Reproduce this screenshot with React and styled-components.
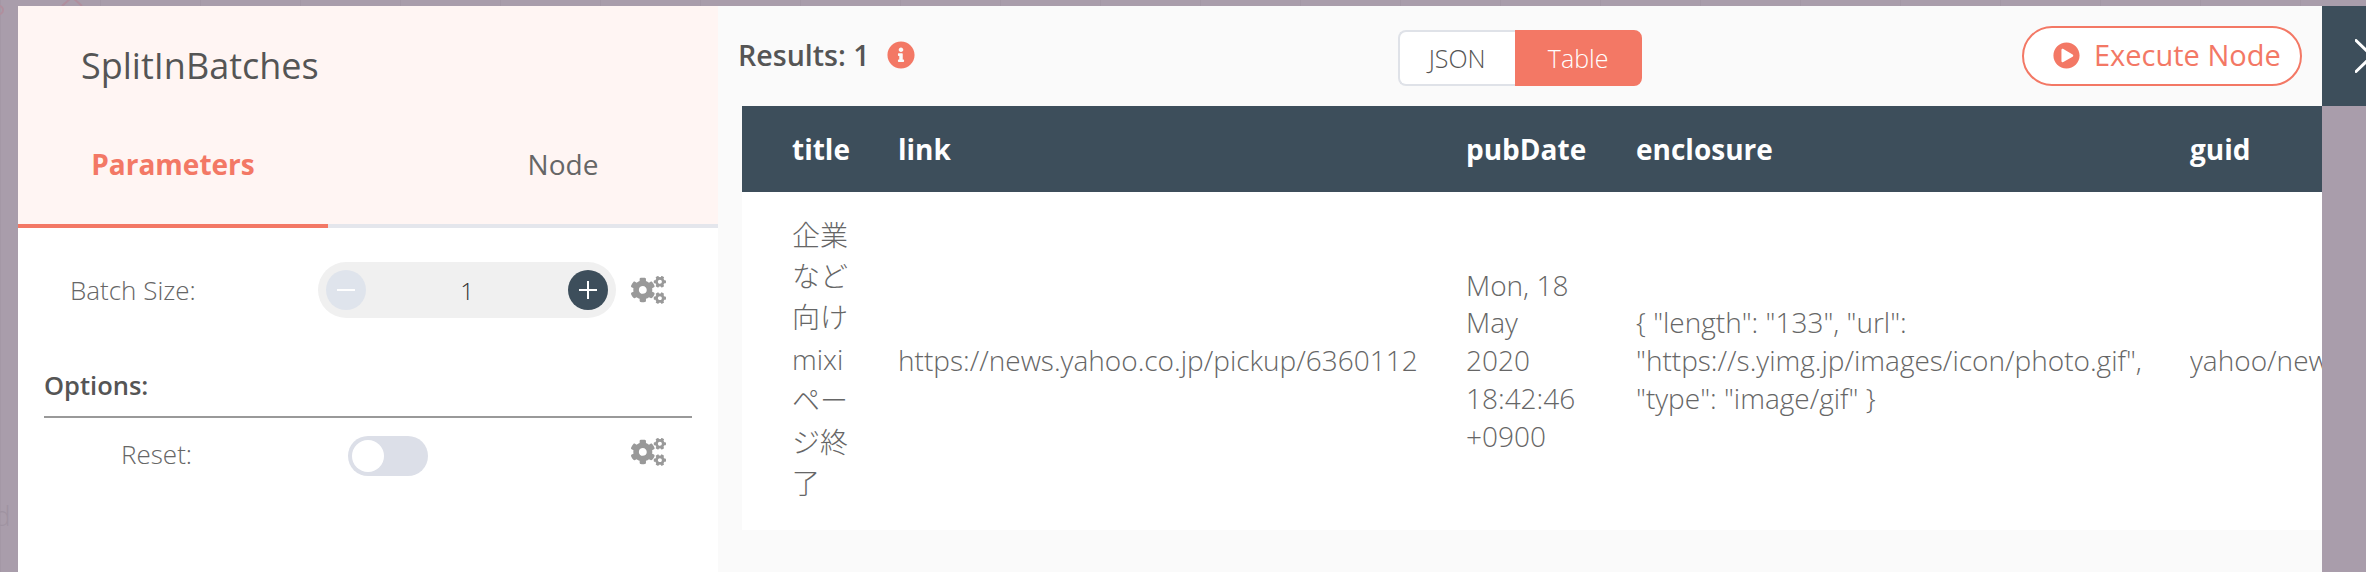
import React from 'react';
import styled, { createGlobalStyle } from 'styled-components';
import { FaCogs, FaInfoCircle, FaPlayCircle } from 'react-icons/fa';

const coral = '#f37865';
const slate = '#3d4e5b';
const textGrey = '#555';
const lightGrey = '#666';

const GlobalStyle = createGlobalStyle`
  html, body {
    margin: 0;
    padding: 0;
    height: 100%;
    overflow: hidden;
  }
  body {
    font-family: "Open Sans", "Noto Sans CJK JP", sans-serif;
    color: ${textGrey};
  }
`;

const Page = styled.div`
  position: relative;
  display: flex;
  align-items: flex-start;
  box-sizing: border-box;
  width: 2366px;
  height: 572px;
  padding: 6px 0 0 18px;
  overflow: hidden;
  background-color: #a99dab;
  background-image: linear-gradient(90deg, #a498a6 1px, transparent 1px);
  background-size: 100px 100px;
`;

/* bits of the workflow canvas showing through behind the modal */
const CanvasMark = styled.svg`
  position: absolute;
  left: 0;
  top: 0;
`;

const CanvasLetter = styled.span`
  position: absolute;
  left: -6px;
  top: 496px;
  font-size: 28px;
  font-weight: 300;
  color: #9f93a1;
`;

const LeftPanel = styled.section`
  position: relative;
  flex: none;
  width: 700px;
  height: 566px;
  background: #fff;
`;

const PanelHead = styled.header`
  background: #fff5f3;
`;

const Title = styled.h1`
  margin: 0;
  padding: 38px 0 0 63px;
  height: 62px;
  font-size: 36px;
  line-height: 44px;
  font-weight: 400;
  color: ${textGrey};
`;

const Tabs = styled.nav`
  display: flex;
  justify-content: space-between;
  height: 122px;
  box-sizing: border-box;
  border-bottom: 4px solid #e4e6ec;
`;

const Tab = styled.div`
  width: 310px;
  height: 122px;
  box-sizing: border-box;
  padding-top: 39px;
  text-align: center;
  font-size: 28px;
  line-height: 38px;
  font-weight: ${({ $active }) => ($active ? 700 : 400)};
  color: ${({ $active }) => ($active ? coral : lightGrey)};
  border-bottom: 4px solid ${({ $active }) => ($active ? coral : 'transparent')};
`;

const ParamRow = styled.div`
  display: grid;
  grid-template-columns: 300px 313px 34px;
  align-items: center;
  margin-top: ${({ $top }) => $top}px;
`;

const ParamLabel = styled.label`
  padding-left: ${({ $indent }) => $indent}px;
  margin-top: ${({ $raise }) => ($raise ? -$raise : 0)}px;
  font-size: 26px;
  line-height: 34px;
  font-weight: 300;
  color: ${lightGrey};
`;

const Stepper = styled.div`
  display: flex;
  align-items: center;
  justify-content: space-between;
  box-sizing: border-box;
  width: 298px;
  height: 56px;
  padding: 0 8px;
  border-radius: 28px;
  background: #f0f0f0;
`;

const StepButton = styled.span`
  display: flex;
  align-items: center;
  justify-content: center;
  width: 40px;
  height: 40px;
  border-radius: 50%;
  background: ${({ $dark }) => ($dark ? slate : '#dfe4ec')};
`;

const StepValue = styled.span`
  font-size: 24px;
  font-weight: 300;
  color: #333;
`;

const Gear = styled(FaCogs)`
  display: block;
  width: 35px;
  height: 28px;
  color: #999;
  align-self: ${({ $raised }) => ($raised ? 'start' : 'center')};
  margin-top: ${({ $raised }) => ($raised ? '2px' : '0')};
`;

const OptionsHead = styled.div`
  margin: 44px 26px 0;
  height: 56px;
  box-sizing: border-box;
  padding-top: 6px;
  border-bottom: 2px solid #999;
  font-size: 25.5px;
  line-height: 34px;
  font-weight: 600;
  color: ${textGrey};
`;

const Toggle = styled.span`
  position: relative;
  display: block;
  margin-left: 30px;
  width: 80px;
  height: 40px;
  border-radius: 20px;
  background: #dcdfe8;

  &::after {
    content: '';
    position: absolute;
    left: 4px;
    top: 4px;
    width: 32px;
    height: 32px;
    border-radius: 50%;
    background: #fff;
  }
`;

const RightPanel = styled.section`
  flex: none;
  width: 1604px;
  height: 566px;
  background: #fafafa;
`;

const ResultsBar = styled.div`
  display: flex;
  align-items: center;
  height: 100px;
  box-sizing: border-box;
  padding: 0 20px 0 20px;
`;

const ResultsLabel = styled.div`
  display: flex;
  align-items: center;
  gap: 17px;
  margin-top: -2px;
  font-size: 28.6px;
  line-height: 38px;
  font-weight: 600;
  color: ${textGrey};
  svg {
    width: 28px;
    height: 28px;
    color: ${coral};
  }
`;

const ModeSwitch = styled.div`
  display: flex;
  margin: 4px 0 0 483px;
  height: 56px;
`;

const ModeButton = styled.span`
  display: flex;
  align-items: center;
  justify-content: center;
  box-sizing: border-box;
  width: ${({ $width }) => $width}px;
  font-size: 25px;
  font-weight: 300;
  color: ${({ $active }) => ($active ? '#fff' : textGrey)};
  background: ${({ $active }) => ($active ? coral : '#fff')};
  border: 2px solid ${({ $active }) => ($active ? coral : '#dfe2e8')};
  border-radius: ${({ $active }) => ($active ? '0 8px 8px 0' : '8px 0 0 8px')};
  border-right-width: ${({ $active }) => ($active ? '2px' : '0')};
`;

const ExecuteLabel = styled.span`
  font-size: 29px;
  line-height: 38px;
  font-weight: 500;
  white-space: nowrap;
`;

const ExecuteButton = styled.button`
  display: flex;
  align-items: center;
  gap: 14px;
  margin-left: auto;
  box-sizing: border-box;
  width: 280px;
  height: 60px;
  padding: 0 0 2px 29px;
  border: 2px solid ${coral};
  border-radius: 30px;
  background: #fff;
  color: ${coral};
  font-family: "Open Sans", sans-serif;
  svg {
    flex: none;
    width: 27px;
    height: 27px;
  }
`;

const TableWrap = styled.div`
  margin-left: 24px;
  width: 1580px;
  overflow: hidden;
`;

const ResultsTable = styled.table`
  width: 1580px;
  table-layout: fixed;
  border-collapse: collapse;
  background: #fff;
`;

const HeadRow = styled.tr`
  height: 86px;
  background: ${slate};
`;

const HeadCell = styled.th`
  padding: 0 0 0 ${({ $pad }) => $pad || 0}px;
  text-align: left;
  font-size: 28px;
  font-weight: 700;
  color: #fff;
`;

const BodyRow = styled.tr`
  height: 338px;
`;

const Cell = styled.td`
  padding: 0 ${({ $right }) => $right || 0}px 0 ${({ $pad }) => $pad || 0}px;
  vertical-align: middle;
  font-size: 28px;
  line-height: 37.8px;
  font-weight: 300;
  color: ${lightGrey};
  white-space: ${({ $nowrap }) => ($nowrap ? 'nowrap' : 'normal')};
  overflow: hidden;
`;

const TitleText = styled.div`
  width: 57px;
  padding-bottom: 3px;
  line-height: 41.4px;
  word-break: break-all;
`;

const CloseButton = styled.div`
  flex: none;
  display: flex;
  align-items: center;
  width: 44px;
  height: 100px;
  padding-left: 33px;
  box-sizing: border-box;
  background: ${slate};
`;

const Cogs = ({ raised }) => <Gear $raised={raised} />;

const StepIcon = ({ plus, color }) => (
  <svg width="20" height="20" viewBox="0 0 20 20" stroke={color} strokeWidth="2">
    <path d="M1 10h18" />
    {plus && <path d="M10 1v18" />}
  </svg>
);

const columns = [156, 568, 170, 554, 132];

const App = () => (
  <>
    <GlobalStyle />
    <Page>
      <CanvasMark width="110" height="30" fill="none" stroke="#b08f9e" strokeWidth="2">
        <path d="M62 6l10-9 10 9" />
        <circle cx="-1" cy="10" r="4" />
      </CanvasMark>
      <CanvasLetter>d</CanvasLetter>
      <LeftPanel>
        <PanelHead>
          <Title>SplitInBatches</Title>
          <Tabs>
            <Tab $active>Parameters</Tab>
            <Tab>Node</Tab>
          </Tabs>
        </PanelHead>
        <ParamRow $top={34}>
          <ParamLabel $indent={52}>Batch Size:</ParamLabel>
          <Stepper>
            <StepButton><StepIcon color="#fff" /></StepButton>
            <StepValue>1</StepValue>
            <StepButton $dark><StepIcon plus color="#fff" /></StepButton>
          </Stepper>
          <Cogs />
        </ParamRow>
        <OptionsHead>Options:</OptionsHead>
        <ParamRow $top={18}>
          <ParamLabel $indent={103} $raise={4}>Reset:</ParamLabel>
          <Toggle />
          <Cogs raised />
        </ParamRow>
      </LeftPanel>
      <RightPanel>
        <ResultsBar>
          <ResultsLabel>
            Results: 1
            <FaInfoCircle />
          </ResultsLabel>
          <ModeSwitch>
            <ModeButton $width={117}>JSON</ModeButton>
            <ModeButton $width={127} $active>Table</ModeButton>
          </ModeSwitch>
          <ExecuteButton>
            <FaPlayCircle />
            <ExecuteLabel>Execute Node</ExecuteLabel>
          </ExecuteButton>
        </ResultsBar>
        <TableWrap>
          <ResultsTable>
            <colgroup>
              {columns.map((width, i) => <col key={i} width={width} />)}
            </colgroup>
            <thead>
              <HeadRow>
                <HeadCell $pad={50}>title</HeadCell>
                <HeadCell>link</HeadCell>
                <HeadCell>pubDate</HeadCell>
                <HeadCell>enclosure</HeadCell>
                <HeadCell>guid</HeadCell>
              </HeadRow>
            </thead>
            <tbody>
              <BodyRow>
                <Cell $pad={50}><TitleText>企業など向けmixiページ終了</TitleText></Cell>
                <Cell>https://news.yahoo.co.jp/pickup/6360112</Cell>
                <Cell $right={55}>Mon, 18 May 2020 18:42:46 +0900</Cell>
                <Cell $right={20}>{'{ "length": "133", "url": "https://s.yimg.jp/images/icon/photo.gif", "type": "image/gif" }'}</Cell>
                <Cell $nowrap>yahoo/news/rss/pickup/6360112</Cell>
              </BodyRow>
            </tbody>
          </ResultsTable>
        </TableWrap>
      </RightPanel>
      <CloseButton>
        <svg width="11" height="34" viewBox="0 0 11 34" fill="none" stroke="#fff" strokeWidth="3" strokeLinecap="round">
          <path d="M1 1.5l16 15.500M1 32.500l16-15.500" />
        </svg>
      </CloseButton>
    </Page>
  </>
);

export default App;
